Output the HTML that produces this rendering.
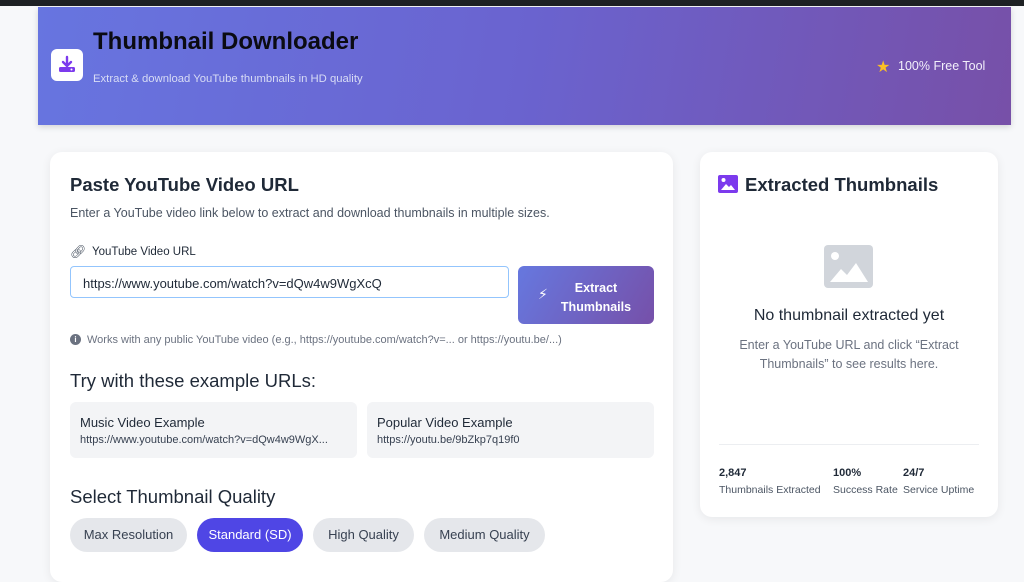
<!DOCTYPE html>
<html><head><meta charset="utf-8"><style>
*{box-sizing:border-box;margin:0;padding:0}
body{width:1024px;height:566px;overflow:hidden;background:#f7f8fa;font-family:"Liberation Sans",sans-serif;position:relative;color:#1f2937}
.a{position:absolute}
.topbar{left:0;top:0;width:1024px;height:6px;background:#1e2124}
.hdr{left:38px;top:7px;width:973px;height:118px;background:linear-gradient(100deg,#6775e0 0%,#6a63cf 50%,#7750a8 100%);box-shadow:0 2px 6px rgba(0,0,0,.15)}
.card{background:#fff;border-radius:12px;box-shadow:0 2px 10px rgba(0,0,0,.07)}
.chip{height:34px;border-radius:17px;background:#e5e7eb;color:#374151;font-size:13px;line-height:34px;text-align:center}
.ex{background:#f3f4f6;border-radius:6px;height:56px}
</style></head><body>
<div class="a topbar"></div>
<div class="a hdr"></div>
<div class="a" style="left:51px;top:49px;width:32px;height:32px;background:#fff;border-radius:6px"></div>
<svg class="a" style="left:57px;top:55px" width="20" height="20" viewBox="0 0 20 20"><path d="M10 2v9M6 7l4 4 4-4" stroke="#7c3aed" stroke-width="2.4" fill="none" stroke-linecap="round" stroke-linejoin="round"/><rect x="2" y="12" width="16" height="5" rx="1.5" fill="#7c3aed"/><circle cx="14.5" cy="14.5" r="1" fill="#fff"/></svg>
<div class="a" style="left:93px;top:28px;font-size:24px;font-weight:bold;color:#0b0b12">Thumbnail Downloader</div>
<div class="a" style="left:93px;top:73px;font-size:11.3px;color:#d8dcf5">Extract &amp; download YouTube thumbnails in HD quality</div>
<div class="a" style="left:876px;top:57px;font-size:16px;color:#fbbf24">★</div>
<div class="a" style="left:898px;top:59px;font-size:12.5px;color:#f3f0fb">100% Free Tool</div>

<div class="a card" style="left:50px;top:152px;width:623px;height:430px"></div>
<div class="a" style="left:70px;top:174px;font-size:18.5px;font-weight:bold;color:#1f2937">Paste YouTube Video URL</div>
<div class="a" style="left:70px;top:206px;font-size:12.5px;color:#4b5563">Enter a YouTube video link below to extract and download thumbnails in multiple sizes.</div>
<div class="a" style="left:70px;top:244px;font-size:13px;color:#4b5563">🔗︎</div>
<div class="a" style="left:92px;top:246px;font-size:11.5px;color:#1f2937">YouTube Video URL</div>
<div class="a" style="left:70px;top:266px;width:439px;height:32px;border:1px solid #93c5fd;border-radius:4px;font-size:13px;padding:9px 12px;color:#1f2937">https://www.youtube.com/watch?v=dQw4w9WgXcQ</div>
<div class="a" style="left:518px;top:266px;width:136px;height:58px;border-radius:6px;background:linear-gradient(120deg,#6678df,#7650a9)"></div>
<div class="a" style="left:538px;top:286px;font-size:14px;color:#fff">⚡︎</div>
<div class="a" style="left:556px;top:279px;width:80px;text-align:center;font-size:12.5px;font-weight:bold;color:#fff;line-height:19px">Extract<br>Thumbnails</div>
<div class="a" style="left:70px;top:334px;width:11px;height:11px;border-radius:50%;background:#6b7280;color:#fff;font-size:8px;text-align:center;line-height:11px;font-weight:bold">i</div>
<div class="a" style="left:87px;top:334px;font-size:11px;color:#6b7280">Works with any public YouTube video (e.g., https://youtube.com/watch?v=... or https://youtu.be/...)</div>
<div class="a" style="left:70px;top:370px;font-size:18.5px;color:#1f2937">Try with these example URLs:</div>
<div class="a ex" style="left:70px;top:402px;width:287px"></div>
<div class="a ex" style="left:367px;top:402px;width:287px"></div>
<div class="a" style="left:80px;top:415px;font-size:13px;color:#1f2937">Music Video Example</div>
<div class="a" style="left:80px;top:434px;font-size:11px;color:#374151">https://www.youtube.com/watch?v=dQw4w9WgX...</div>
<div class="a" style="left:377px;top:415px;font-size:13px;color:#1f2937">Popular Video Example</div>
<div class="a" style="left:377px;top:434px;font-size:11px;color:#374151">https://youtu.be/9bZkp7q19f0</div>
<div class="a" style="left:70px;top:486px;font-size:18.5px;color:#1f2937">Select Thumbnail Quality</div>
<div class="a chip" style="left:70px;top:518px;width:117px">Max Resolution</div>
<div class="a chip" style="left:197px;top:518px;width:106px;background:#4f46e5;color:#fff">Standard (SD)</div>
<div class="a chip" style="left:313px;top:518px;width:101px">High Quality</div>
<div class="a chip" style="left:424px;top:518px;width:121px">Medium Quality</div>

<div class="a card" style="left:700px;top:152px;width:298px;height:365px"></div>
<svg class="a" style="left:718px;top:175px" width="20" height="18" viewBox="0 0 20 18"><rect width="20" height="18" rx="2" fill="#7c3aed"/><circle cx="5.5" cy="5" r="2" fill="#fff"/><path d="M3 15l5-6 3 3 2-2 4 5z" fill="#fff"/></svg>
<div class="a" style="left:745px;top:174px;font-size:18.5px;font-weight:bold;color:#1f2937">Extracted Thumbnails</div>
<svg class="a" style="left:824px;top:245px" width="49" height="43" viewBox="0 0 49 43"><rect width="49" height="43" rx="4" fill="#d1d5db"/><circle cx="11" cy="11" r="4" fill="#fff"/><path d="M6 37l11-13 6 6 9-12 12 19z" fill="#fff"/></svg>
<div class="a" style="left:700px;top:307px;width:298px;text-align:center;font-size:16px;color:#1f2937">No thumbnail extracted yet</div>
<div class="a" style="left:730px;top:336px;width:238px;text-align:center;font-size:12.5px;color:#6b7280;line-height:19px">Enter a YouTube URL and click “Extract Thumbnails” to see results here.</div>
<div class="a" style="left:719px;top:444px;width:260px;height:1px;background:#eceef1"></div>
<div class="a" style="left:719px;top:467px;font-size:11px;font-weight:bold">2,847</div>
<div class="a" style="left:719px;top:484px;font-size:10.5px;color:#4b5563">Thumbnails Extracted</div>
<div class="a" style="left:833px;top:467px;font-size:11px;font-weight:bold">100%</div>
<div class="a" style="left:833px;top:484px;font-size:10.5px;color:#4b5563">Success Rate</div>
<div class="a" style="left:903px;top:467px;font-size:11px;font-weight:bold">24/7</div>
<div class="a" style="left:903px;top:484px;font-size:10.5px;color:#4b5563">Service Uptime</div>
</body></html>
